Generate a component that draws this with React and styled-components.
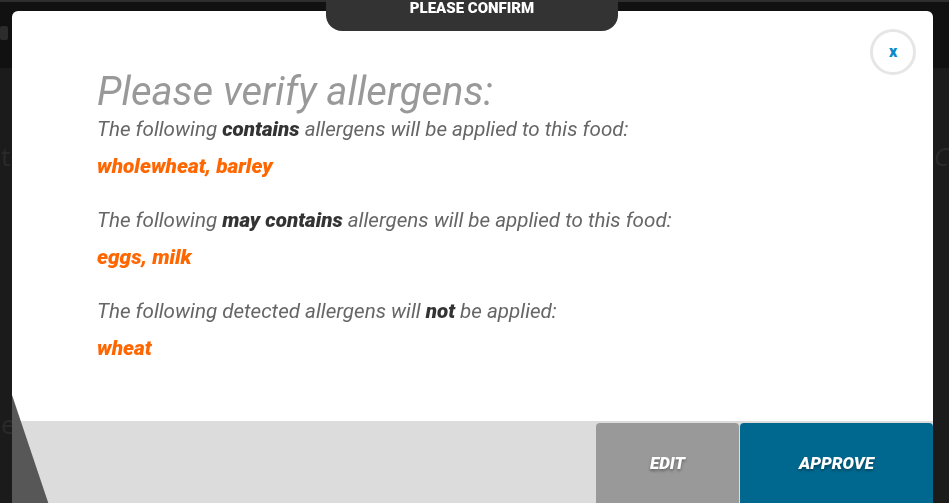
import React from 'react';
import styled, { createGlobalStyle } from 'styled-components';

const GlobalStyle = createGlobalStyle`
  html, body {
    margin: 0;
    padding: 0;
    height: 100%;
    overflow: hidden;
  }
  body {
    background: #1b1b1b;
    font-family: Roboto, 'Liberation Sans', sans-serif;
  }
  * {
    box-sizing: border-box;
  }
`;

const Page = styled.div`
  height: 100vh;
  display: flex;
  flex-direction: column;
  background: #1b1b1b;
  border-top: 2px solid #2e2e2e;
`;

const TopBar = styled.div`
  height: 66px;
  background: #111111;
  display: flex;
  align-items: center;
`;

const TopBarIcon = styled.div`
  width: 8px;
  height: 14px;
  margin-top: -4px;
  border-radius: 2px;
  background: #2c2c2c;
`;

const PageBody = styled.div`
  flex: 1;
  display: flex;
  flex-direction: column;
  padding-top: 70px;
  gap: 232px;
  font-family: 'Open Sans', sans-serif;
  font-size: 26px;
  color: #2a2a2a;
`;

const PageRow = styled.div`
  display: flex;
  justify-content: space-between;
  padding-left: 1px;
`;

const Ghost = styled.span`
  font-style: ${p => (p.$italic ? 'italic' : 'normal')};
`;

const Overlay = styled.div`
  position: fixed;
  inset: 0;
`;

const Modal = styled.div`
  position: absolute;
  top: 11px;
  left: 12px;
  width: 921px;
  height: 500px;
  background: #ffffff;
  border-radius: 6px 6px 0 0;
  display: flex;
  flex-direction: column;
  overflow: hidden;
`;

const Tab = styled.div`
  position: absolute;
  top: 0;
  left: 326px;
  width: 292px;
  height: 31px;
  background: #333333;
  border-radius: 0 0 16px 16px;
  display: flex;
  justify-content: center;
  color: #ffffff;
  font-size: 15px;
  font-weight: 900;
  line-height: 17px;
  z-index: 2;
`;

const CloseButton = styled.button`
  position: absolute;
  top: 18px;
  right: 17px;
  width: 46px;
  height: 46px;
  border-radius: 50%;
  border: 3px solid #e6e6e6;
  background: #ffffff;
  color: #0a8ac8;
  font-family: Roboto, sans-serif;
  font-size: 16px;
  font-weight: 900;
  display: flex;
  align-items: center;
  justify-content: center;
  padding: 0 0 2px 0;
  cursor: pointer;
`;

const Content = styled.div`
  flex: 1;
  padding: 59px 0 0 85px;
`;

const Title = styled.h1`
  margin: 0 0 3px 0;
  font-size: 40px;
  font-weight: 400;
  font-style: italic;
  color: #999999;
  line-height: 44px;
`;

const Section = styled.div`
  display: flex;
  flex-direction: column;
  gap: 13px;
  margin-bottom: 30px;
`;

const Note = styled.p`
  margin: 0;
  font-size: 20.6px;
  font-style: italic;
  color: #666666;
  line-height: 24px;

  b {
    color: #333333;
    font-weight: 900;
  }
`;

const Allergens = styled.p`
  margin: 0;
  font-size: 20.8px;
  font-style: italic;
  font-weight: 900;
  color: #ff6600;
  line-height: 24px;
`;

const Footer = styled.div`
  height: 90px;
  background: #dcdcdc;
  display: flex;
  justify-content: flex-end;
  gap: 1px;
  padding-top: 2px;
`;

const ActionButton = styled.button`
  width: ${p => p.$width}px;
  border: none;
  border-radius: 4px 4px 0 0;
  background: ${p => p.$bg};
  color: #ffffff;
  font-family: Roboto, sans-serif;
  font-size: 17px;
  font-weight: 900;
  font-style: italic;
  text-shadow: 0 2px 3px rgba(0, 0, 0, 0.35);
  display: flex;
  justify-content: center;
  padding-top: 30px;
  cursor: pointer;
`;

const Wedge = styled.svg`
  position: absolute;
  left: 0;
  bottom: 0;
`;

const sections = [
  {
    note: <>The following <b>contains</b> allergens will be applied to this food:</>,
    items: 'wholewheat, barley'
  },
  {
    note: <>The following <b>may contains</b> allergens will be applied to this food:</>,
    items: 'eggs, milk'
  },
  {
    note: <>The following detected allergens will <b>not</b> be applied:</>,
    items: 'wheat'
  }
];

export default function App() {
  return (
    <>
      <GlobalStyle />
      <Page>
        <TopBar>
          <TopBarIcon />
        </TopBar>
        <PageBody>
          <PageRow>
            <Ghost>t</Ghost>
            <Ghost $italic>C</Ghost>
          </PageRow>
          <PageRow>
            <Ghost>ec</Ghost>
          </PageRow>
        </PageBody>
      </Page>

      <Overlay>
        <Tab>PLEASE CONFIRM</Tab>
        <Modal>
          <CloseButton>x</CloseButton>
          <Content>
            <Title>Please verify allergens:</Title>
            {sections.map((s, i) => (
              <Section key={i}>
                <Note>{s.note}</Note>
                <Allergens>{s.items}</Allergens>
              </Section>
            ))}
          </Content>
          <Footer>
            <ActionButton $width={143} $bg="#999999">EDIT</ActionButton>
            <ActionButton $width={193} $bg="#00688f">APPROVE</ActionButton>
          </Footer>
          <Wedge width="40" height="120" viewBox="0 0 40 120">
            <polygon points="0,4 39,120 0,120" fill="#575757" />
          </Wedge>
        </Modal>
      </Overlay>
    </>
  );
}
